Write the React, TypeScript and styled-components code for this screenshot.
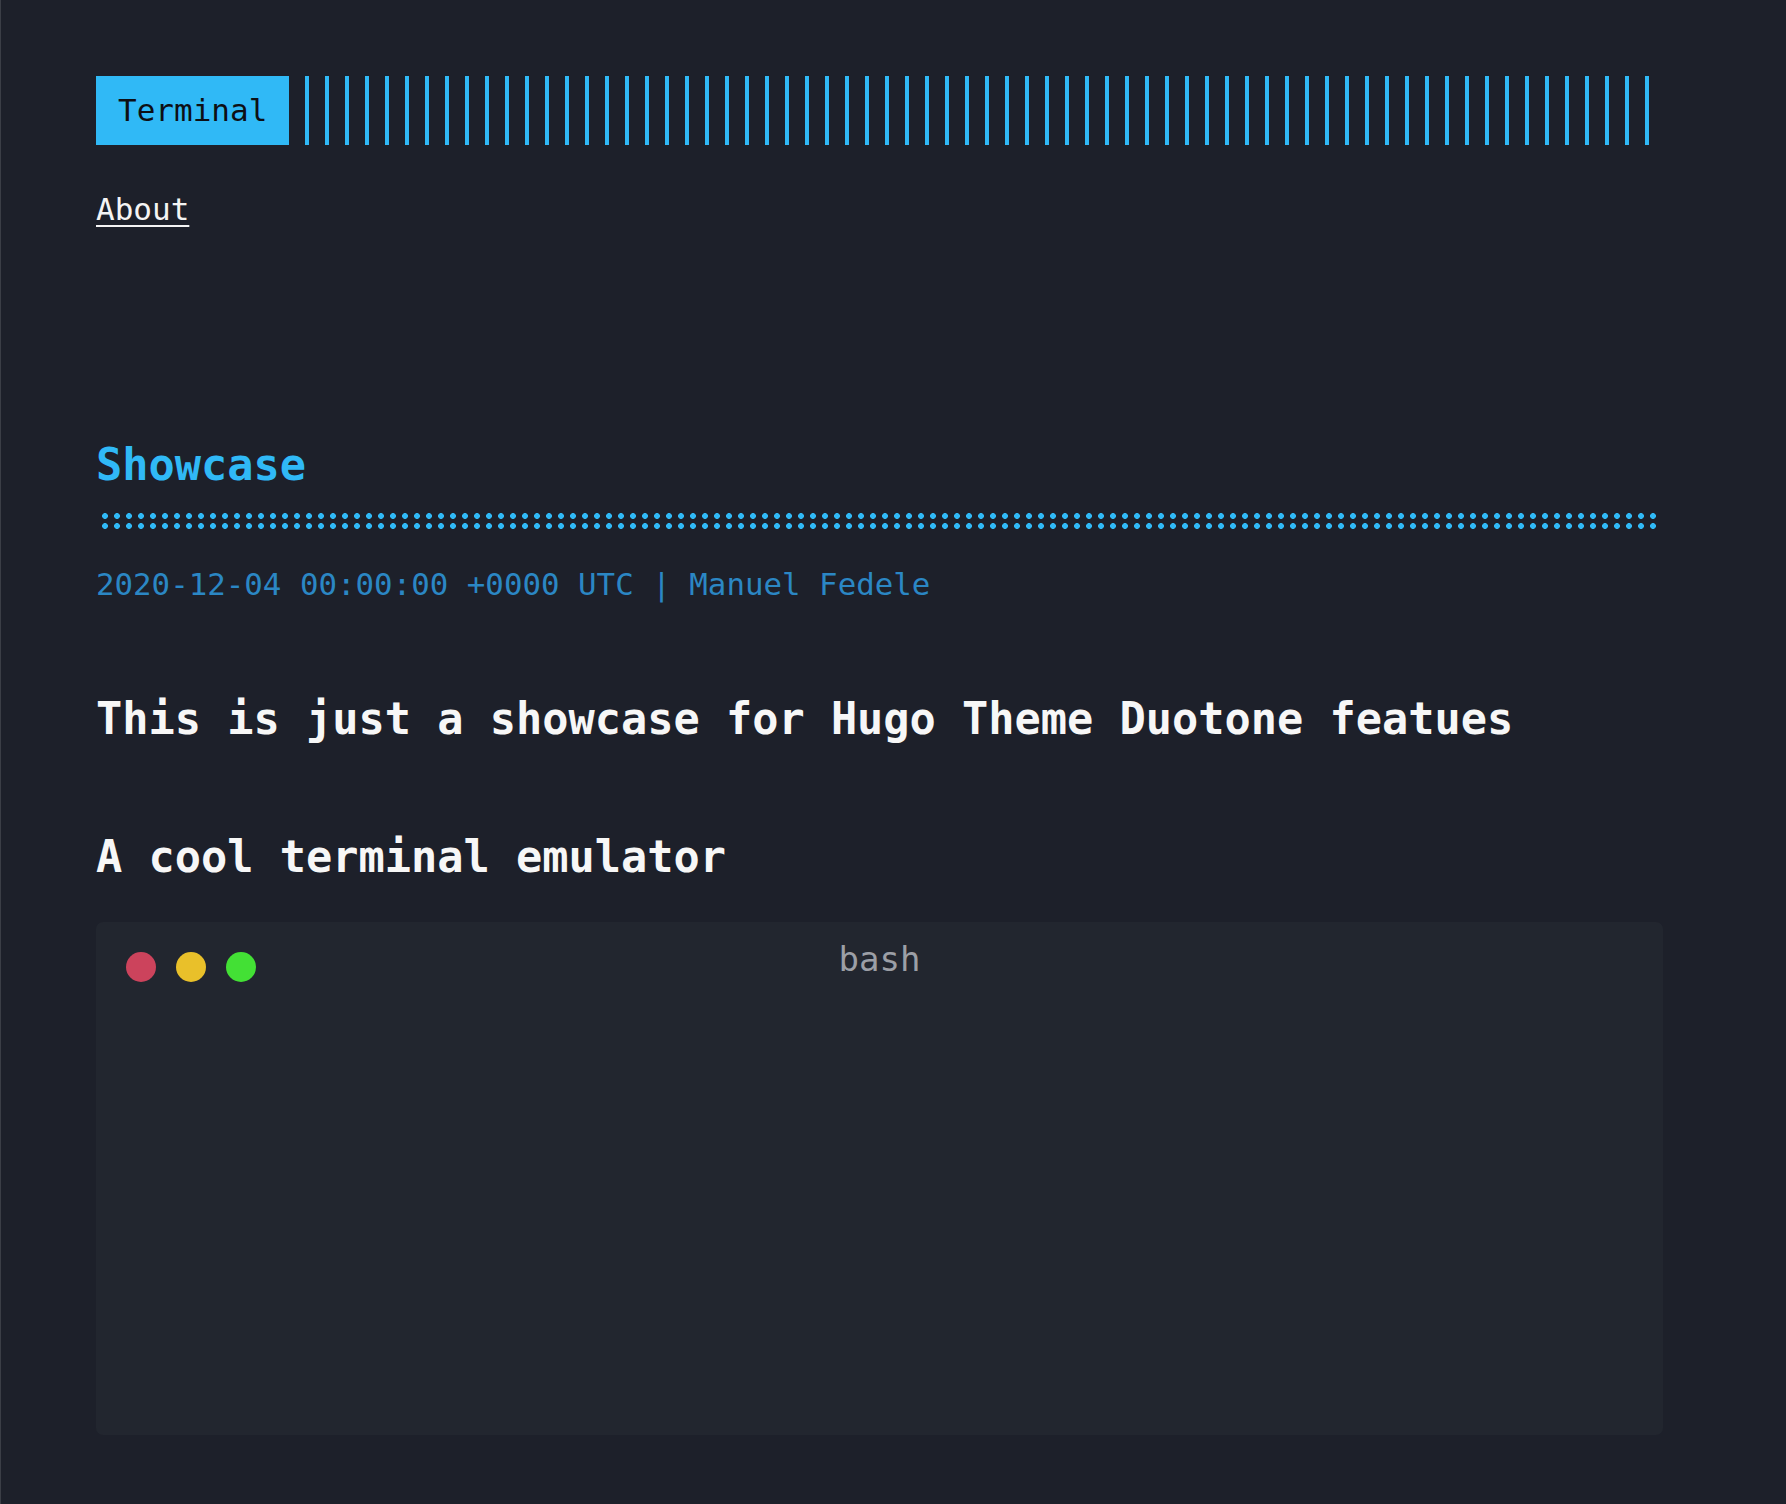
import styled, { createGlobalStyle } from 'styled-components';

const accent = '#30b9f6';

const GlobalStyle = createGlobalStyle`
  html, body {
    margin: 0;
    padding: 0;
    background: #1d202a;
  }
  * {
    box-sizing: border-box;
  }
`;

const Page = styled.div`
  min-height: 100vh;
  border-left: 1px solid #3b3e46;
  background: #1d202a;
  color: #f4f4f4;
  font-family: "DejaVu Sans Mono", "Liberation Mono", monospace;
  padding: 76px 0 0 95px;
`;

const Container = styled.div`
  width: 1568px;
`;

const Header = styled.header`
  display: flex;
  height: 69px;
`;

const Logo = styled.a`
  display: flex;
  align-items: center;
  padding: 0 22px;
  background: ${accent};
  color: #0d0f14;
  font-size: 31px;
  line-height: 69px;
  text-decoration: none;
`;

const Bars = styled.div`
  flex: 1;
  background: repeating-linear-gradient(
    90deg,
    transparent 0,
    transparent 16px,
    ${accent} 16px,
    ${accent} 20px
  );
`;

const Nav = styled.nav`
  margin-top: 46px;
  display: flex;
  gap: 24px;
`;

const NavLink = styled.a`
  color: #f4f4f4;
  font-size: 31px;
  line-height: 36px;
  text-decoration: underline;
  text-decoration-thickness: 2px;
  text-underline-offset: 5px;
`;

const Post = styled.article`
  margin-top: 212px;
`;

const PostTitle = styled.h1`
  margin: 0;
  color: ${accent};
  font-size: 43.6px;
  font-weight: bold;
  line-height: 52px;
`;

const Dots = styled.div`
  margin-top: 20px;
  width: 1562px;
  height: 20px;
  background-image: radial-gradient(circle at 6px 5px, ${accent} 2.6px, transparent 3.2px);
  background-size: 12px 10px;
  background-position: 3px 0;
`;

const Meta = styled.div`
  margin-top: 35px;
  color: #2b87c4;
  font-size: 30.8px;
  line-height: 36px;
`;

const Heading = styled.h2<{ $gap: number }>`
  margin: ${(p) => p.$gap}px 0 0;
  color: #f7f7f7;
  font-size: 43.6px;
  font-weight: bold;
  line-height: 52px;
`;

const TermWindow = styled.div`
  margin-top: 39px;
  width: 1567px;
  height: 513px;
  background: #22262f;
  border-radius: 7px;
  padding: 19px 30px;
`;

const TermBar = styled.div`
  display: grid;
  grid-template-columns: 1fr auto 1fr;
  align-items: start;
`;

const Lights = styled.div`
  display: flex;
  gap: 20px;
  margin-top: 11px;
`;

const Light = styled.span<{ $color: string }>`
  width: 30px;
  height: 30px;
  border-radius: 50%;
  background: ${(p) => p.$color};
`;

const TermTitle = styled.div`
  color: #9c9fa6;
  font-size: 34px;
  line-height: 36px;
`;

const App = () => {
  return (
    <Page>
      <GlobalStyle />
      <Container>
        <Header>
          <Logo href="#">Terminal</Logo>
          <Bars />
        </Header>
        <Nav>
          <NavLink href="#">About</NavLink>
        </Nav>
        <Post>
          <PostTitle>Showcase</PostTitle>
          <Dots />
          <Meta>2020-12-04 00:00:00 +0000 UTC | Manuel Fedele</Meta>
          <Heading $gap={91}>This is just a showcase for Hugo Theme Duotone featues</Heading>
          <Heading $gap={86}>A cool terminal emulator</Heading>
          <TermWindow>
            <TermBar>
              <Lights>
                <Light $color="#cc435c" />
                <Light $color="#e9c02a" />
                <Light $color="#43e035" />
              </Lights>
              <TermTitle>bash</TermTitle>
              <div />
            </TermBar>
          </TermWindow>
        </Post>
      </Container>
    </Page>
  );
};

export default App;
